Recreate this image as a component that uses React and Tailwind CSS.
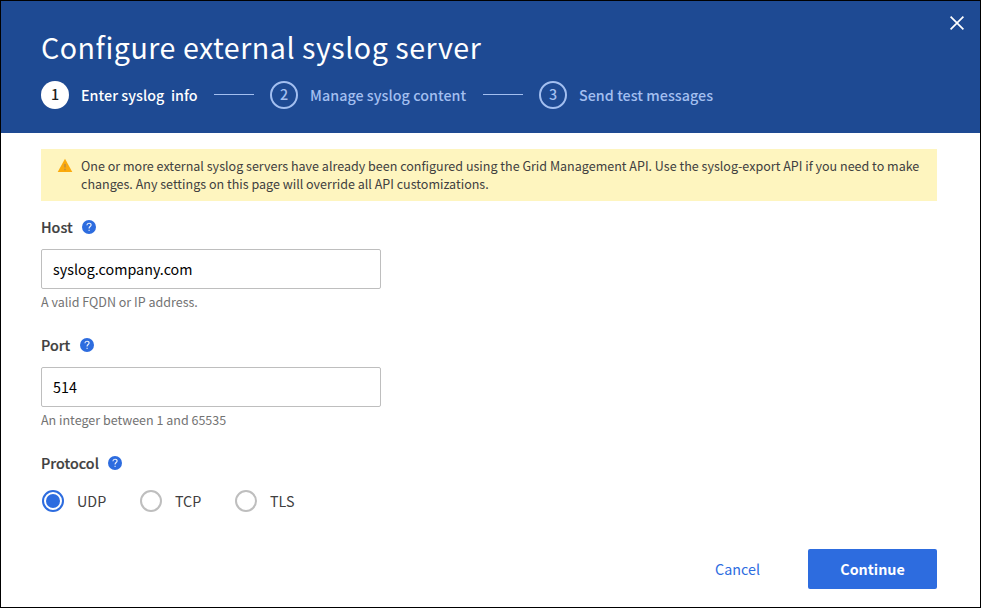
import React from "react";

const STEPS = ["Enter syslog  info", "Manage syslog content", "Send test messages"];
const STEP_WIDTHS = ["w-[117px]", "w-[157px]", "w-[136px]"];

function Help() {
  return (
    <svg className="block size-[14px]" viewBox="0 0 14 14" fill="none" aria-label="Help">
      <circle cx="7" cy="7" r="7" fill="#2d6cdf" />
      <path d="M4.9 5.2C5 3.9 5.9 3.2 7 3.2c1.2 0 2.1.7 2.1 1.8 0 1.5-2 1.6-2 3.2v.3" stroke="#eef2fa" strokeWidth="1.15" />
      <path d="M7.1 9.8v1.2" stroke="#d5dff2" strokeWidth="1.2" />
    </svg>
  );
}

function Label({ children }) {
  return (
    <div className="flex h-[22px] items-center gap-[9.3px]">
      <span className="text-[14.3px] font-medium leading-[22px] tracking-[0.03px] text-[#404040] [-webkit-text-stroke:0.2px_#404040]">{children}</span>
      <Help />
    </div>
  );
}

function Field({ label, value, hint }) {
  return (
    <div className="h-[118px]">
      <Label>{label}</Label>
      <input
        defaultValue={value}
        className="mt-[11px] block h-10 w-[340px] rounded-[2px] border border-[#bebebe] bg-white px-[11px] pb-[1px] text-[14.3px] tracking-[0.02px] text-black outline-none"
      />
      <p className="mt-[3px] text-[12.53px] leading-[20px] text-[#737373]">{hint}</p>
    </div>
  );
}

function Radio({ label, checked }) {
  return (
    <label className="flex items-center gap-[13px]">
      <span className={checked
        ? "flex size-[22px] items-center justify-center rounded-full border-2 border-[#2d6cdf]"
        : "flex size-[22px] items-center justify-center rounded-full border-2 border-[#bebebe]"}>
        {checked && <span className="size-[14px] rounded-full bg-[#2d6cdf]" />}
      </span>
      <span className="text-[14.3px] leading-[22px] text-[#404040]">{label}</span>
    </label>
  );
}

export default function App() {
  return (
    <div className="flex h-[608px] w-[981px] flex-col border border-black bg-white font-['Noto_Sans_CJK_JP',sans-serif]">
      <header className="flex h-[132px] shrink-0 justify-between bg-[#1e4a93] pl-10">
        <div>
          <h1 className="mt-[26px] whitespace-nowrap text-[28.6px] leading-[40px] tracking-[0.52px] text-white">
            Configure external syslog server
          </h1>
          <ol className="mt-[14px] flex h-7 items-center">
            {STEPS.map((step, i) => (
              <li key={step} className="flex items-center">
                {i > 0 && <span className="mx-4 h-px w-10 -translate-y-px bg-[#a3bff0]" />}
                <span className={i === 0
                  ? "flex size-7 items-center justify-center rounded-full bg-white text-[14.3px] font-medium text-[#202020]"
                  : "flex size-7 items-center justify-center rounded-full border-2 border-[#a3bff0] text-[14.3px] font-medium text-[#a3bff0]"}>
                  <span className="-translate-y-px">{i + 1}</span>
                </span>
                <span className={`ml-3 whitespace-pre text-[14.3px] font-medium leading-[22px] tracking-[0.04px] ${STEP_WIDTHS[i]} ${i === 0 ? "text-white" : "text-[#a3bff0]"}`}>
                  {step}
                </span>
              </li>
            ))}
          </ol>
        </div>
        <button className="mr-4 mt-[15px] size-[14px]" aria-label="Close">
          <svg className="block size-[14px]" viewBox="0 0 14 14" stroke="white" strokeWidth="1.7">
            <path d="M.6.6l12.8 12.8M13.4.6.6 13.4" />
          </svg>
        </button>
      </header>

      <main className="flex grow flex-col px-10 pt-4">
        <div className="flex h-[52px] w-[896px] shrink-0 gap-[8px] bg-[#fef5bf] pl-4 pt-2">
          <svg className="mt-[1px] block h-[14px] w-4 shrink-0" viewBox="0 0 16 14">
            <path d="M8 .8 15.3 14H.7z" fill="#fbaa0c" />
            <path d="M8 6v3.5M8 10.7v1.5" stroke="#b98a45" strokeWidth="1.4" />
          </svg>
          <p className="whitespace-nowrap text-[12.53px] leading-[18px] tracking-[0.006px] text-[#404040]">
            One or more external syslog servers have already been configured using the Grid Management API. Use the syslog-export API if you need to make
            <br />
            changes. Any settings on this page will override all API customizations.
          </p>
        </div>
        <div className="mt-[15px]">
          <Field label="Host" value="syslog.company.com" hint="A valid FQDN or IP address." />
          <Field label="Port" value="514" hint="An integer between 1 and 65535" />
          <Label>Protocol</Label>
          <div className="ml-px mt-[16px] flex gap-[33.7px]">
            <Radio label="UDP" checked />
            <Radio label="TCP" />
            <Radio label="TLS" />
          </div>
        </div>
        <footer className="mr-[3px] mt-[37px] flex h-10 shrink-0 items-center justify-end gap-[48px]">
          <button className="text-[14.3px] tracking-[0.02px] text-[#2d6cdf]">Cancel</button>
          <button className="h-10 w-[129px] rounded-[2px] bg-[#2d6cdf] pb-px text-[14.3px] font-bold text-white">Continue</button>
        </footer>
      </main>
    </div>
  );
}
